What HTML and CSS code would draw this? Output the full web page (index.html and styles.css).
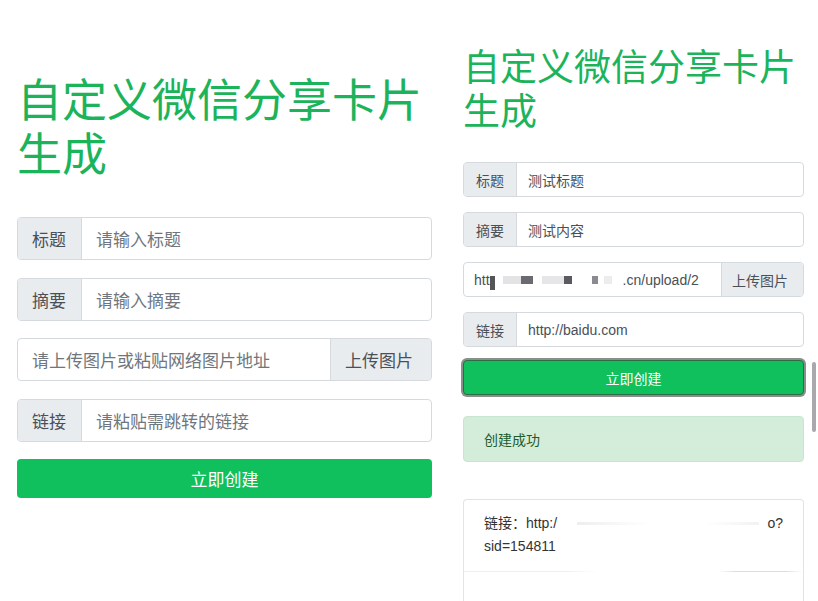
FILE: index.html
```html
<!DOCTYPE html>
<html lang="zh-CN">
<head>
<meta charset="utf-8">
<link rel="stylesheet" href="styles.css">
</head>
<body>
<div class="page">
  <section class="panel panel-left">
    <h1 class="title">自定义微信分享卡片生成</h1>
    <div class="group">
      <span class="addon">标题</span>
      <span class="field ph">请输入标题</span>
    </div>
    <div class="group">
      <span class="addon">摘要</span>
      <span class="field ph">请输入摘要</span>
    </div>
    <div class="group">
      <span class="field field-first ph">请上传图片或粘贴网络图片地址</span>
      <span class="addon addon-right">上传图片</span>
    </div>
    <div class="group">
      <span class="addon">链接</span>
      <span class="field ph">请粘贴需跳转的链接</span>
    </div>
    <button class="btn">立即创建</button>
  </section>

  <section class="panel panel-right">
    <h1 class="title">自定义微信分享卡片生成</h1>
    <div class="group">
      <span class="addon">标题</span>
      <span class="field">测试标题</span>
    </div>
    <div class="group">
      <span class="addon">摘要</span>
      <span class="field">测试内容</span>
    </div>
    <div class="group">
      <span class="field field-first">htt<span class="blur">
        <i class="bk b1"></i><i class="bk b2"></i><i class="bk b3"></i><i class="bk b4"></i><i class="bk b5"></i><i class="bk b6"></i><i class="bk b7"></i>
      </span>.cn/upload/2</span>
      <span class="addon addon-right">上传图片</span>
    </div>
    <div class="group">
      <span class="addon">链接</span>
      <span class="field">http://baidu.com</span>
    </div>
    <button class="btn btn-focus">立即创建</button>
    <div class="alert">创建成功</div>
    <div class="card">
      <div class="card-body">
        <p class="card-line"><span>链接：http:/</span><span class="smear"></span><span>o?</span></p>
        <p class="card-line">sid=154811</p>
      </div>
      <div class="card-rule"></div>
    </div>
    <div class="scrollbar"></div>
  </section>
</div>
</body>
</html>
```
FILE: styles.css
```css
* { box-sizing: border-box; }
html, body { margin: 0; padding: 0; background: #fff; }
body {
  font-family: "Liberation Sans", "Noto Sans CJK SC", sans-serif;
  color: #495057;
  width: 818px;
  height: 601px;
  overflow: hidden;
}
.page {
  display: flex;
  align-items: flex-start;
}
.panel { display: flex; flex-direction: column; }
.panel-left {
  width: 415px;
  margin-left: 17px;
  padding-top: 71px;
}
.panel-right {
  position: relative;
  width: 341px;
  margin-left: 31px;
  padding-top: 43px;
  height: 601px;
}
.title {
  margin: 0;
  font-family: "Noto Sans CJK SC", sans-serif;
  font-weight: 400;
  color: #1cb45b;
}
.panel-left .title {
  font-size: 45px;
  line-height: 54px;
  padding-left: 0;
  margin-bottom: 38px;
}
.panel-right .title {
  font-size: 37px;
  line-height: 44px;
  padding-left: 0;
  margin-bottom: 31px;
}
.group {
  display: flex;
  border: 1px solid #d6dadf;
  border-radius: 4px;
  overflow: hidden;
  background: #fff;
}
.panel-left .group { height: 43px; margin-bottom: 17.5px; font-size: 17px; }
.panel-right .group { height: 35px; margin-bottom: 15px; font-size: 14px; }
.addon {
  display: flex;
  align-items: center;
  background: #e9ecef;
  color: #495057;
  border-right: 1px solid #d6dadf;
}
.panel-left .addon { width: 64px; padding-left: 14px; }
.panel-right .addon { width: 53px; padding-left: 12px; }
.addon-right { border-right: none; border-left: 1px solid #d6dadf; }
.panel-left .addon-right { width: 101px; padding-left: 14px; }
.panel-right .addon-right { width: 82px; padding-left: 10px; }
.field {
  flex: 1;
  display: flex;
  align-items: center;
  color: #495057;
  white-space: nowrap;
  overflow: hidden;
}
.panel-left .field { padding-left: 14px; }
.panel-right .field { padding-left: 11px; }
.panel-left .field-first { padding-left: 14px; }
.panel-right .field-first { padding-left: 10px; }
.ph { color: #6f767d; }
.blur { display: inline-flex; align-items: center; gap: 0; width: 133px; height: 20px; position: relative; }
.bk { display: block; height: 8px; }
.b1 { width: 5px; height: 14px; background: #555; margin-top: 6px; }
.b2 { width: 18px; background: #e3e3e6; margin-left: 8px; }
.b3 { width: 12px; background: #6a6a70; }
.b4 { width: 22px; background: #e6e6e9; margin-left: 9px; }
.b5 { width: 8px; background: #5a5a60; }
.b6 { width: 6px; background: #8a8a90; margin-left: 20px; }
.b7 { width: 8px; background: #ececef; margin-left: 6px; }
.btn {
  display: block;
  width: 100%;
  border: none;
  border-radius: 4px;
  background: #10c05c;
  color: #fff;
  font-family: "Noto Sans CJK SC", sans-serif;
  padding: 0;
  cursor: pointer;
}
.panel-left .btn { height: 39px; font-size: 17px; margin-top: 0; }
.panel-right .btn { height: 35px; font-size: 14px; margin-top: -2px; }
.btn-focus {
  box-shadow: 0 0 0 2px #8a8f8c;
  border: 1px solid #2b6e45;
}
.alert {
  margin-top: 21px;
  height: 46px;
  display: flex;
  align-items: center;
  padding-left: 20px;
  background: #d4edda;
  border: 1px solid #c8e6cf;
  border-radius: 4px;
  color: #1d5a2c;
  font-size: 14px;
}
.card {
  margin-top: 37px;
  flex: 1;
  border: 1px solid #e3e3e3;
  border-radius: 4px 4px 0 0;
  border-bottom: none;
}
.card-body { padding: 12px 20px 10px; }
.card-line {
  margin: 0;
  font-size: 14px;
  line-height: 23px;
  color: #333;
  display: flex;
}
.smear { flex: 1; margin: 10px 8px 0 20px; height: 3px; background: linear-gradient(90deg, #eee 0%, #fff 40%, #fff 70%, #f2f2f2 100%); }
.card-rule { margin-top: 3px; height: 1px; background: linear-gradient(90deg, #eee 0%, #eee 30%, #fff 40%, #fff 75%, #ddd 80%, #ddd 95%, #fff 100%); }
.scrollbar {
  position: absolute;
  right: -12px;
  top: 362px;
  width: 4px;
  height: 70px;
  background: #a9a9ad;
  border-radius: 2px;
}
```
